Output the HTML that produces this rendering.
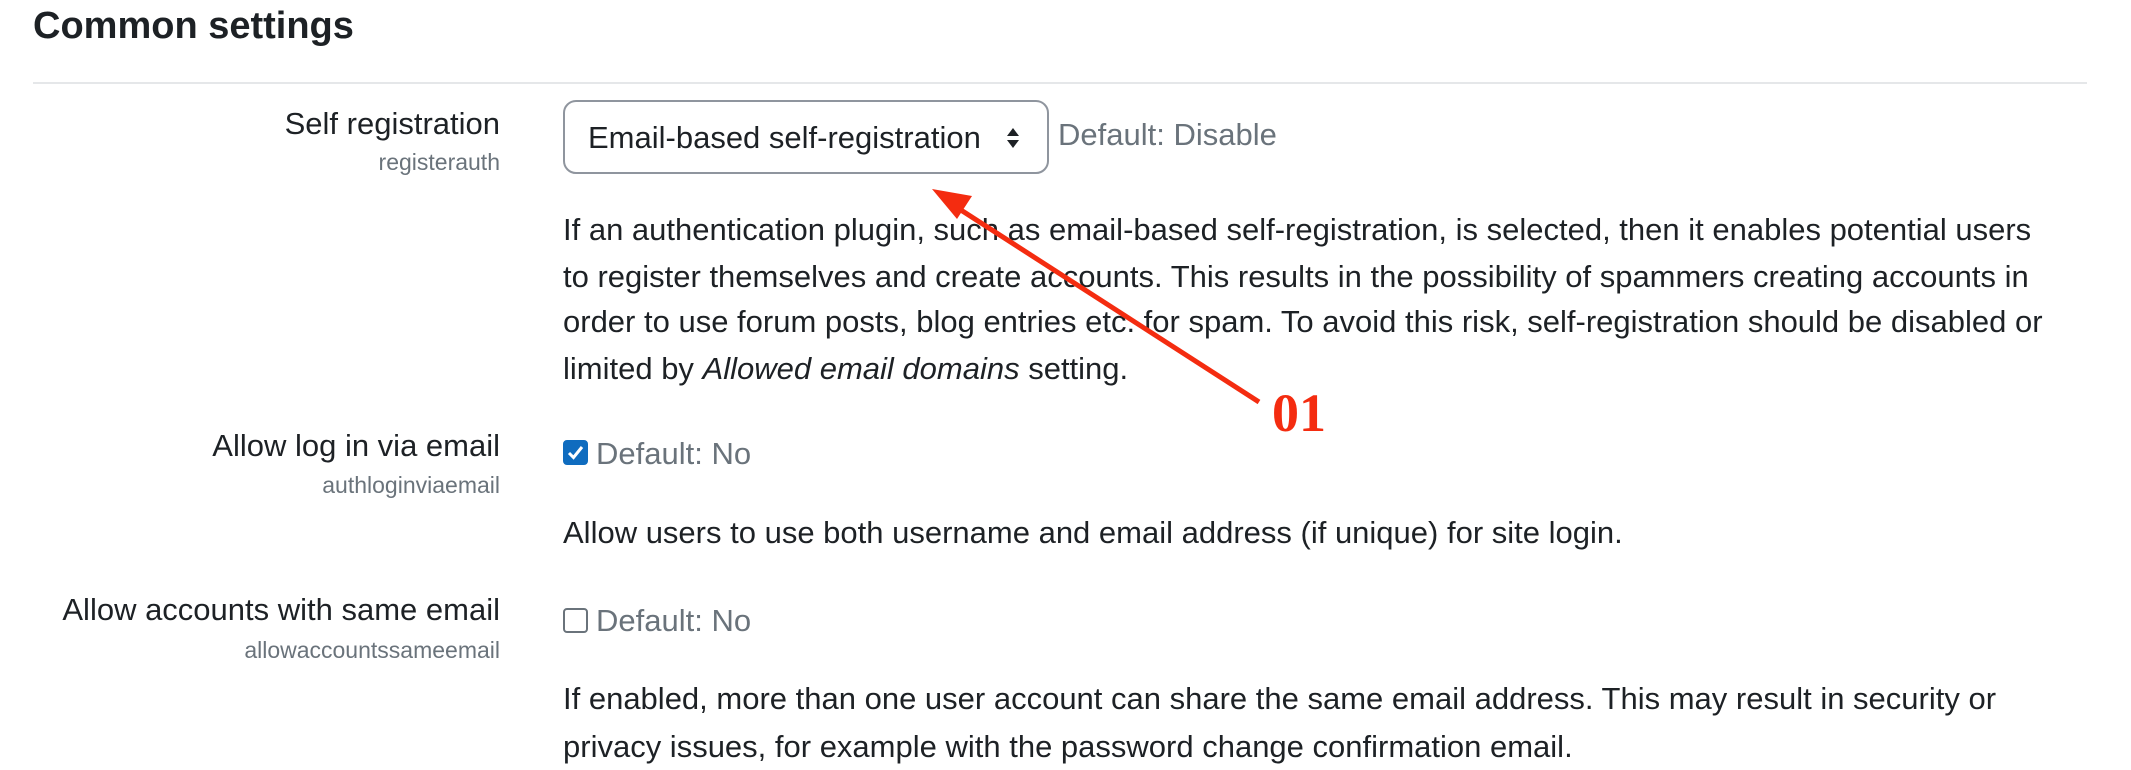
<!DOCTYPE html>
<html><head><meta charset="utf-8"><style>
body{margin:0;width:2131px;height:764px;background:#fff;font-family:"Liberation Sans",sans-serif;color:#1d2125;position:relative;overflow:hidden}
.a{position:absolute;white-space:nowrap;line-height:46px}
h1{position:absolute;left:33px;top:3px;margin:0;font-size:38px;line-height:46px;font-weight:bold}
.hr{position:absolute;left:33px;top:82px;width:2054px;height:2px;background:#e5e7e9}
.lab{right:1631px;font-size:31px}
.sm{right:1631px;font-size:23px;color:#6a737b}
.t{left:563px;font-size:31px}
.g{color:#6a737b;font-size:31px}
.sel{position:absolute;left:563px;top:100px;width:482px;height:70px;border:2px solid #8f959e;border-radius:13px;box-sizing:content-box}
.cb{position:absolute;left:563px;width:25px;height:25px;border-radius:4px}
</style></head><body>
<h1>Common settings</h1>
<div class="hr"></div>

<div class="a lab" style="top:101px">Self registration</div>
<div class="a sm" style="top:139px">registerauth</div>
<div class="sel"></div>
<div class="a" style="left:588px;top:115px;font-size:31px;color:#1d2125">Email-based self-registration</div>
<svg class="a" style="left:1005px;top:126px" width="16" height="24" viewBox="0 0 16 24"><path d="M8 2 L14 10 H2Z M8 22 L14 14 H2Z" fill="#1d2125"/></svg>
<div class="a g" style="left:1058px;top:112px">Default: Disable</div>
<div class="a t" style="top:207px">If an authentication plugin, such as email-based self-registration, is selected, then it enables potential users</div>
<div class="a t" style="top:254px">to register themselves and create accounts. This results in the possibility of spammers creating accounts in</div>
<div class="a t" style="top:299px">order to use forum posts, blog entries etc. for spam. To avoid this risk, self-registration should be disabled or</div>
<div class="a t" style="top:346px">limited by <i>Allowed email domains</i> setting.</div>

<div class="a lab" style="top:423px">Allow log in via email</div>
<div class="a sm" style="top:462px">authloginviaemail</div>
<div class="cb" style="top:440px;background:#0f6cbf;border:1px solid #0f6cbf;box-sizing:border-box"><svg width="23" height="23" viewBox="0 0 23 23"><path d="M5 12 L9.5 16.5 L18 6" stroke="#fff" stroke-width="3" fill="none"/></svg></div>
<div class="a g" style="left:596px;top:431px">Default: No</div>
<div class="a t" style="top:510px">Allow users to use both username and email address (if unique) for site login.</div>

<div class="a lab" style="top:587px">Allow accounts with same email</div>
<div class="a sm" style="top:627px">allowaccountssameemail</div>
<div class="cb" style="top:608px;border:2px solid #6a737b;box-sizing:border-box"></div>
<div class="a g" style="left:596px;top:598px">Default: No</div>
<div class="a t" style="top:676px">If enabled, more than one user account can share the same email address. This may result in security or</div>
<div class="a t" style="top:724px">privacy issues, for example with the password change confirmation email.</div>

<svg class="a" style="left:0;top:0" width="2131" height="764"><line x1="1259" y1="402" x2="950" y2="203" stroke="#f42c10" stroke-width="5"/><path d="M932 189 L972 196 L957 219Z" fill="#f42c10"/></svg>
<div class="a" style="left:1272px;top:390px;font-family:'Liberation Serif',serif;font-weight:bold;font-size:54px;line-height:46px;color:#f42c10">01</div>
</body></html>
